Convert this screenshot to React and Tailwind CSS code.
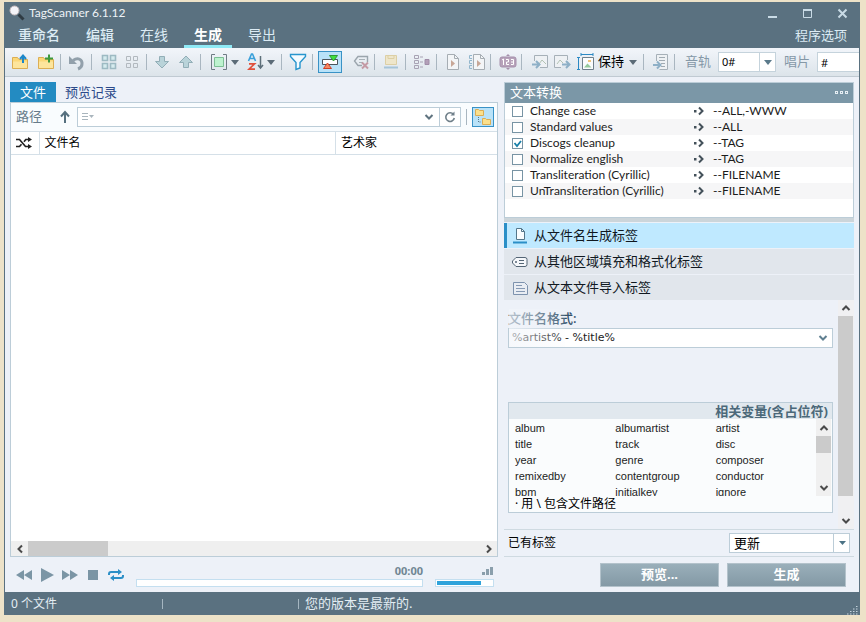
import clsx from 'clsx'

const conversions = [
  { name: 'Change case', target: '--ALL,-WWW' },
  { name: 'Standard values', target: '--ALL' },
  { name: 'Discogs cleanup', target: '--TAG', on: true },
  { name: 'Normalize english', target: '--TAG' },
  { name: 'Transliteration (Cyrillic)', target: '--FILENAME' },
  { name: 'UnTransliteration (Cyrillic)', target: '--FILENAME' },
]

const variables = [
  'album', 'albumartist', 'artist',
  'title', 'track', 'disc',
  'year', 'genre', 'composer',
  'remixedby', 'contentgroup', 'conductor',
  'bpm', 'initialkey', 'ignore',
]

function Svg({ w = 18, h = 18, className, children }) {
  return (
    <svg width={w} height={h} viewBox={`0 0 ${w} ${h}`} fill="none" className={clsx('block shrink-0', className)} aria-hidden="true">
      {children}
    </svg>
  )
}

function Tool({ label, className, children }) {
  return (
    <button type="button" aria-label={label} className={clsx('shrink-0', className)}>
      <Svg>{children}</Svg>
    </button>
  )
}

function Sep({ className }) {
  return <span className={clsx('h-4 w-px shrink-0 bg-[#a9b6c0]', className)} />
}

function Caret({ label, className }) {
  return (
    <button type="button" aria-label={label} className={clsx('shrink-0', className)}>
      <Svg w={8} h={5}><path d="M0 0h8L4 5z" fill="#5b6b77" /></Svg>
    </button>
  )
}

function Chevron({ dir = 'down', color = '#4a4a4a' }) {
  const d = {
    down: 'M1.5 3l3.5 3.5L8.500 3',
    up: 'M1.500 7L5 3.500 8.500 7',
    left: 'M7 1.500L3.500 5 7 8.500',
    right: 'M3 1.500L6.500 5 3 8.500',
  }[dir]
  return <Svg w={10} h={10}><path d={d} stroke={color} strokeWidth="2" /></Svg>
}

function Folder() {
  return (
    <>
      <path d="M1.500 15.500v-11h5l1.500 2h8.500v9z" fill="#fbd878" stroke="#dcae54" />
      <path d="M2 15V8.500h14V15z" fill="#fde59c" />
    </>
  )
}

function TitleBar() {
  return (
    <div className="flex h-[22px] items-center pl-1 text-[#eef3f6]">
      <Svg w={16} h={16}>
        <path d="M9.500 9.500l5 5" stroke="#2f3b43" strokeWidth="3" />
        <circle cx="5.500" cy="5.500" r="4.500" fill="#f4f4f8" stroke="#c3b8ba" />
      </Svg>
      <h1 className="ml-1 font-['Lato',sans-serif] text-[12px]">TagScanner 6.1.12</h1>
      <div className="ml-auto flex items-center gap-6 pr-[11px]">
        <button type="button" aria-label="最小化"><Svg w={11} h={11}><path d="M1 9h9" stroke="#c9dbe6" strokeWidth="2" /></Svg></button>
        <button type="button" aria-label="最大化"><Svg w={11} h={11}><path d="M1.500 1.500h8v8h-8z" stroke="#c9dbe6" /><path d="M1 2h9" stroke="#c9dbe6" strokeWidth="2" /></Svg></button>
        <button type="button" aria-label="关闭"><Svg w={11} h={11}><path d="M1.500 1.500l8 8M9.500 1.500l-8 8" stroke="#c9dbe6" strokeWidth="2" /></Svg></button>
      </div>
    </div>
  )
}

function MenuBar() {
  const items = ['重命名', '编辑', '在线', '生成', '导出']
  return (
    <nav className="flex h-6 items-stretch gap-[6px] pl-[3px] pr-3 text-[14px] text-[#dcebf4]">
      {items.map((item) => (
        <button
          key={item}
          type="button"
          className={clsx(
            'border-b-[3px] px-[10px]',
            item === '生成' ? 'border-[#8fe9f5] font-bold text-white' : 'border-transparent',
            (item === '重命名' || item === '编辑') && 'font-medium',
          )}
        >
          {item}
        </button>
      ))}
      <button type="button" className="ml-auto text-[13px]">程序选项</button>
    </nav>
  )
}

function Toolbar() {
  return (
    <div className="flex h-7 shrink-0 items-center overflow-hidden bg-linear-to-b from-[#f2f5fa] to-[#dce4ea] pl-[6px] text-[13px]">
      <Tool label="打开文件夹">
        <Folder />
        <path d="M12 10V3M9 6l3-3.500L15 6" stroke="#1c87c9" strokeWidth="2" />
      </Tool>
      <Tool label="添加文件夹" className="ml-2">
        <Folder />
        <path d="M12 1.500v8M8 5.500h8" stroke="#3c9a3c" strokeWidth="2" />
      </Tool>
      <Sep className="ml-[5px]" />
      <Tool label="撤销" className="ml-[6px]">
        <path d="M6 7.500c5-3.500 9.500-1 9 3.500 0 2-1.500 4-4 5" stroke="#92a0ab" strokeWidth="3" />
        <path d="M2 3v8h8z" fill="#92a0ab" />
      </Tool>
      <Sep className="ml-[6px]" />
      <Tool label="全选" className="ml-2">
        <path d="M2.500 2.500h5v5h-5zM10.500 2.500h5v5h-5zM2.500 10.500h5v5h-5zM10.500 10.500h5v5h-5z" fill="#d5ebee" stroke="#9dbac3" strokeWidth="1.600" />
      </Tool>
      <Tool label="取消选择" className="ml-[5px]">
        <path d="M3.500 3.500h4v4h-4zM10.500 3.500h4v4h-4zM3.500 10.500h4v4h-4zM10.500 10.500h4v4h-4z" stroke="#b2b9bf" strokeWidth="1" />
      </Tool>
      <Sep className="ml-[5px]" />
      <Tool label="下移" className="ml-[6px]">
        <path d="M6.500 3.500h5v5h4L9 15 2.500 8.500h4z" fill="#b9d3d9" stroke="#92aeb7" />
      </Tool>
      <Tool label="上移" className="ml-[6px]">
        <path d="M6.500 14.500h5v-5h4L9 3 2.500 9.500h4z" fill="#b9d3d9" stroke="#92aeb7" />
      </Tool>
      <Sep className="ml-[5px]" />
      <Tool label="选择" className="ml-[9px]">
        <path d="M5 1.500H1.500v15H5M13 1.500h3.500v15H13" stroke="#6f7b84" />
        <path d="M4.500 4.500h9v9h-9z" fill="#bdf3cf" stroke="#7dbf95" />
      </Tool>
      <Caret label="选择选项" className="ml-[3px]" />
      <Tool label="排序" className="ml-2">
        <path d="M1.500 8L4.500 1h1L8.500 8M3 5.500h4" stroke="#3aa0da" strokeWidth="1.600" />
        <path d="M2 10.800h5.500L2 16.200h6" stroke="#e0503c" strokeWidth="1.800" />
        <path d="M13.500 3v11M11 12l2.500 3 2.500-3" stroke="#5d6f7a" strokeWidth="1.500" />
      </Tool>
      <Caret label="排序选项" className="ml-0.5" />
      <Sep className="ml-[6px]" />
      <Tool label="筛选" className="ml-[7px]">
        <path d="M1.500 1.500h15v2L11 9.500V15l-4 1.500v-7l-5.500-6z" fill="#f4fbff" stroke="#2795cd" strokeWidth="1.400" />
      </Tool>
      <Sep className="ml-[5px]" />
      <button type="button" aria-label="自动预览" aria-pressed="true" className="ml-[5px] flex h-[22px] w-6 shrink-0 items-center justify-center border border-[#3992c6] bg-[#b9e2f8]">
        <Svg>
          <path d="M1.500 6.500h15v5h-15z" fill="#fff" stroke="#4b555c" />
          <path d="M8.500 2.500h8L12.500 8z" fill="#3fe03f" stroke="#2f9a35" />
          <path d="M2.500 15.500h8L6.500 10z" fill="#f58a63" stroke="#cf4128" />
        </Svg>
      </button>
      <Tool label="清除标签" className="ml-[10px]">
        <path d="M15.500 9V3.500H6L2.500 8 6 12.500h4" stroke="#9ba5ad" strokeWidth="1.400" />
        <path d="M7 6.500h6M7 9.500h4" stroke="#a9b2b8" />
        <path d="M10 9.500l6 6M16 9.500l-6 6" stroke="#c49aa5" strokeWidth="2" />
      </Tool>
      <Sep className="ml-1" />
      <Tool label="保存" className="ml-[7px]">
        <path d="M3.500 2.500h11v9h-11z" fill="#eee6cb" stroke="#dccfa5" />
        <path d="M6 2.500v3h6v-3" stroke="#dccfa5" />
        <path d="M2 14.500h14" stroke="#a6c4d8" strokeWidth="2" />
      </Tool>
      <Sep className="ml-[5px]" />
      <Tool label="整理" className="ml-[7px]">
        <path d="M1.500 2.500h4v3h-4zM1.500 7.500h4v3h-4zM1.500 12.500h4v3h-4zM7 4h3M7 9h3M7 14h3" stroke="#a8a3b4" />
        <path d="M12 6.500h4v5h-4z" fill="#b39fb8" stroke="#a08da8" />
      </Tool>
      <Sep className="ml-[5px]" />
      <Tool label="播放" className="ml-[7px]">
        <path d="M3.500 1.500h7l4 4v11h-11z" fill="#f3f5f7" stroke="#a6adb3" />
        <path d="M10.500 1.500v4h4" stroke="#a6adb3" />
        <path d="M7 7v7l4-3.500z" fill="#c8a797" />
      </Tool>
      <Tool label="播放列表" className="ml-[6px]">
        <path d="M5.500 1.500h7l4 4v11h-11z" fill="#f3f5f7" stroke="#a6adb3" />
        <path d="M12.500 1.500v4h4" stroke="#a6adb3" />
        <path d="M9 7v7l4-3.500z" fill="#c8a797" />
        <path d="M4 2.500H1.500v3H4M4 7.500H1.500v3H4M4 12.500H1.500v3H4" stroke="#92b6cc" />
      </Tool>
      <Sep className="ml-1" />
      <Tool label="编号" className="ml-2">
        <rect x="1" y="4" width="16" height="10" rx="2" fill="#b7a2ba" stroke="#a58fab" />
        <path d="M3 7l1.500-1v6M7 6.500h2.500V9H7.500v2.500H10M12 6.500h2.500v5H12M12 9h2.500" stroke="#fff" />
        <path d="M7 3l2-2 2 2zM7 15l2 2 2-2z" fill="#a58fab" />
      </Tool>
      <Sep className="ml-1" />
      <Tool label="导入封面" className="ml-[9px]">
        <path d="M3.500 8V2.500h13v12H9" fill="#eef1f4" stroke="#a6b0b8" />
        <path d="M8 11l3-4 4 4" stroke="#b3c3b4" />
        <path d="M1 11.500h7M5 8l3.500 3.500L5 15" stroke="#8eb0c7" strokeWidth="2" />
      </Tool>
      <Tool label="导出封面" className="ml-1">
        <path d="M14.500 7V2.500h-13v12H8" fill="#eef1f4" stroke="#a6b0b8" />
        <path d="M4 11l3-4 3 3" stroke="#b3c3b4" />
        <path d="M9 11.500h7M13 8l3.500 3.500L13 15" stroke="#8eb0c7" strokeWidth="2" />
      </Tool>
      <button type="button" className="ml-[6px] flex shrink-0 items-center gap-[3px] text-black">
        <Svg>
          <path d="M4 1.500h12M4 0v3M16 0v3M1.500 4v13M0 4.500h3M0 16.500h3" stroke="#2b89c4" />
          <path d="M5.500 4.500h11v12h-11z" fill="#fafcfd" stroke="#6e7f8b" />
          <path d="M7 14.500l3.500-4 4 4z" fill="#93c99b" />
          <path d="M11 7h3v2h-3z" fill="#efc57b" />
        </Svg>
        保持
      </button>
      <Caret label="保持选项" className="ml-[5px]" />
      <Sep className="ml-[6px]" />
      <Tool label="导入文本" className="ml-2">
        <path d="M4.500 8V1.500h11v15h-8" fill="#eef1f4" stroke="#a6b0b8" />
        <path d="M7 4.500h6M7 7.500h6M9 10.500h4M9 13.500h4" stroke="#a0aab2" />
        <path d="M1 12h7M5 8.500L8.500 12 5 15.500" stroke="#8eb0c7" strokeWidth="2" />
      </Tool>
      <Sep className="ml-1" />
      <label htmlFor="track" className="ml-[10px] shrink-0 text-[#8598a7]">音轨</label>
      <div className="relative ml-[7px] shrink-0">
        <select id="track" className="block h-5 w-[58px] appearance-none border border-[#c5d3dc] bg-white pl-[3px] text-[11px] text-black">
          <option>0#</option>
        </select>
        <span className="pointer-events-none absolute inset-y-0 right-0 flex w-[17px] items-center justify-center border-l border-[#c5d3dc]">
          <Svg w={8} h={5}><path d="M0 0h8L4 5z" fill="#5b7a8b" /></Svg>
        </span>
      </div>
      <label htmlFor="disc" className="ml-2 shrink-0 text-[#8598a7]">唱片</label>
      <input id="disc" defaultValue="#" className="ml-[7px] h-5 w-[58px] shrink-0 border border-[#c5d3dc] bg-white px-[3px] text-[11px] text-black" />
    </div>
  )
}

function FilePane() {
  return (
    <section className="flex min-h-0 min-w-0 flex-col">
      <div role="tablist" className="flex h-5 shrink-0 text-[13px]">
        <button type="button" role="tab" aria-selected="true" className="bg-[#238bc2] px-[10px] leading-5 text-white">文件</button>
        <button type="button" role="tab" aria-selected="false" className="px-[9px] leading-5 text-[#2c4a8a]">预览记录</button>
      </div>
      <div className="flex min-h-0 flex-1 flex-col border border-[#bccdd8] bg-white">
        <div className="flex h-7 shrink-0 items-center bg-[#f9fcfe] pl-[5px] pr-[3px]">
          <label htmlFor="path" className="text-[13px] text-[#667b8a]">路径</label>
          <button type="button" aria-label="上级目录" className="ml-[18px]">
            <Svg w={10} h={14}><path d="M5 13V3M1 6.500l4-4.500 4 4.500" stroke="#56707f" strokeWidth="2" /></Svg>
          </button>
          <div className="ml-[7px] flex h-5 min-w-0 flex-1 items-center border border-[#bccdd8] bg-white">
            <Svg w={14} h={10} className="ml-1"><path d="M0 1.500h6M0 4.500h6M0 7.500h6" stroke="#a9b5bd" /><path d="M7 3h5L9.500 6z" fill="#a9b5bd" /></Svg>
            <input id="path" defaultValue="" className="min-w-0 flex-1 px-1 text-[12px] outline-none" />
            <button type="button" aria-label="历史" className="px-[5px]"><Chevron color="#5f737f" /></button>
            <button type="button" aria-label="刷新" className="flex h-full w-[21px] items-center justify-center border-l border-[#bccdd8]">
              <Svg w={12} h={12}><path d="M9.500 3.500A4.300 4.300 0 1 0 10.300 7" stroke="#6f7f89" strokeWidth="1.600" /><path d="M6.500 4.500h4V0.500z" fill="#6f7f89" /></Svg>
            </button>
          </div>
          <Sep className="ml-[5px]" />
          <button type="button" aria-label="文件夹树" aria-pressed="true" className="ml-[5px] flex h-5 w-[22px] items-center justify-center border border-[#3992c6] bg-[#b9e2f8]">
            <Svg>
              <path d="M1.500 1.500h3l1 1h4v5h-8z" fill="#fbe08c" stroke="#dcae54" />
              <path d="M8.500 10.500h3l1 1h4v5h-8z" fill="#fbe08c" stroke="#dcae54" />
              <path d="M4.500 9v5h3" stroke="#5b7a8b" strokeDasharray="1 1" />
            </Svg>
          </button>
        </div>
        <table className="w-full table-fixed border-t border-[#d5e0e8] text-left text-[12px] text-black">
          <thead>
            <tr className="h-[23px] border-b border-[#d5e0e8]">
              <th className="w-7 border-r border-[#d5e0e8] pl-[5px]">
                <Svg w={16} h={12}>
                  <path d="M0 2.500h3.500l6 7H13M0 9.500h3.500l2-2.300M8 4.700l1.800-2.200H13" stroke="#222" strokeWidth="1.700" />
                  <path d="M12 0l4 2.500L12 5zM12 7l4 2.500-4 2.500z" fill="#222" />
                </Svg>
              </th>
              <th className="w-[61%] border-r border-[#d5e0e8] pl-[5px] font-normal">文件名</th>
              <th className="pl-[5px] font-normal">艺术家</th>
            </tr>
          </thead>
        </table>
        <div className="flex-1" />
        <div className="flex h-[15px] shrink-0 items-center bg-[#efefef]">
          <button type="button" aria-label="向左" className="flex w-[17px] justify-center"><Chevron dir="left" /></button>
          <div className="h-full w-20 bg-[#cbcbcb]" />
          <button type="button" aria-label="向右" className="ml-auto flex w-[17px] justify-center"><Chevron dir="right" /></button>
        </div>
      </div>
      <Player />
    </section>
  )
}

function Player() {
  return (
    <div className="flex h-[35px] shrink-0 items-center pl-[6px] pr-1">
      <button type="button" aria-label="上一首"><Svg w={17} h={12}><path d="M8 1v10L0 6zM16 1v10L8 6z" fill="#7b95a5" /></Svg></button>
      <button type="button" aria-label="播放" className="ml-2"><Svg w={13} h={14}><path d="M0 0v14l13-7z" fill="#7b95a5" /></Svg></button>
      <button type="button" aria-label="下一首" className="ml-2"><Svg w={17} h={12}><path d="M0 1v10l8-5zM8 1v10l8-5z" fill="#7b95a5" /></Svg></button>
      <button type="button" aria-label="停止" className="ml-[9px]"><Svg w={10} h={10}><path d="M0 0h10v10H0z" fill="#7b95a5" /></Svg></button>
      <button type="button" aria-label="循环" className="ml-[10px]">
        <Svg w={16} h={12}>
          <path d="M1 6V5q0-2 2-2h8M15 6v1q0 2-2 2H5" stroke="#2b8fc7" strokeWidth="2" />
          <path d="M10 0l4 3-4 3zM6 6L2 9l4 3z" fill="#2b8fc7" />
        </Svg>
      </button>
      <div className="ml-3 min-w-0 flex-1">
        <p className="text-right text-[11px] leading-4 font-bold text-[#708693]">00:00</p>
        <div className="h-2 border border-[#c4dff0] bg-white" />
      </div>
      <div className="ml-3 w-[59px]">
        <div className="flex h-4 items-center justify-end">
          <Svg w={12} h={10}><path d="M0 6h3v3H0zM4 3h3v6H4zM8 1h3v8H8z" fill="#8b9fac" /></Svg>
        </div>
        <div className="h-2 border border-[#c4dff0] bg-white p-px">
          <div className="h-full w-4/5 bg-[#2fa3db]" />
        </div>
      </div>
    </div>
  )
}

function ConversionPanel() {
  return (
    <div className="flex h-[136px] shrink-0 flex-col border border-[#bccdd8] bg-white">
      <div className="flex h-5 items-center justify-between bg-[#7b97a7] px-[5px] text-[13px] text-white">
        <h2>文本转换</h2>
        <button type="button" aria-label="更多"><Svg w={13} h={4}><path d="M0 0h3v3H0zM5 0h3v3H5zM10 0h3v3h-3z" fill="#e6eef3" /><path d="M1 1h1v1H1zM6 1h1v1H6zM11 1h1v1h-1z" fill="#7b97a7" /></Svg></button>
      </div>
      <ul className="font-['Lato','Noto_Sans_CJK_SC',sans-serif] text-[12px] leading-4 text-[#1c1c1c]">
        {conversions.map((c) => (
          <li key={c.name} className="even:bg-[#f6f6f7]">
            <label className="grid h-4 grid-cols-[25px_164px_19px_1fr] items-center">
              <span className="relative ml-[7px] size-[11px]">
                <input type="checkbox" defaultChecked={c.on} className="peer block size-[11px] appearance-none border border-[#7894a4] bg-white" />
                <svg viewBox="0 0 11 11" className="pointer-events-none absolute inset-0 hidden size-[11px] peer-checked:block" fill="none">
                  <path d="M2.500 5l2.500 3 4-5" stroke="#177fa8" strokeWidth="1.800" />
                </svg>
              </span>
              <span>{c.name}</span>
              <Svg w={11} h={10}><path d="M0 4h2.500v2.500H0z" fill="#44515a" /><path d="M5 1.500L8.500 5 5 8.500" stroke="#44515a" strokeWidth="2" /></Svg>
              <span>{c.target}</span>
            </label>
          </li>
        ))}
      </ul>
    </div>
  )
}

function ModeButton({ label, selected, children }) {
  return (
    <button
      type="button"
      aria-pressed={!!selected}
      className={clsx(
        'flex h-[25px] w-full items-center gap-[5px] border-l-[3px] pl-1 text-[13px] text-[#10181f]',
        selected ? 'border-[#2b8fc7] bg-[#bfe9ff]' : 'border-transparent bg-[#e1e6ec]',
      )}
    >
      <Svg>{children}</Svg>
      {label}
    </button>
  )
}

function FormatForm() {
  return (
    <div className="flex min-h-0 flex-1 border-b border-[#cfdae1]">
      <div className="flex min-w-0 flex-1 flex-col pl-1 pr-[5px] pt-2">
        <div className="relative">
          <label htmlFor="format" className="block text-[13px] leading-5 font-medium text-[#35536b]">文件名格式:</label>
          <div className="relative">
            <select id="format" className="block h-5 w-full appearance-none border border-[#bccdd8] bg-white px-[3px] font-['DejaVu_Sans',sans-serif] text-[11px] text-[#1c1c1c]">
              <option>%artist% - %title%</option>
            </select>
            <span className="pointer-events-none absolute inset-y-0 right-[5px] flex items-center"><Chevron color="#5f7f90" /></span>
          </div>
          {/* soft fade at the start of the field */}
          <div className="pointer-events-none absolute inset-y-px left-px w-14 bg-linear-to-r from-[#f2f5fa]/70 to-[#f2f5fa]/10" />
        </div>
        <div className="mt-[54px] border border-[#bccdd8] bg-[#fafcfd] text-[#1c1c1c]">
          <h3 className="h-4 bg-[#e1e8ee] pr-1 text-right text-[13px] leading-4 font-bold text-[#4b6879]">相关变量(含占位符)</h3>
          <div className="flex h-[77px]">
            <ul className="grid flex-1 grid-cols-3 content-start overflow-hidden pl-[6px] pt-px font-['Liberation_Sans',sans-serif] text-[11px] leading-4">
              {variables.map((v) => <li key={v}>{v}</li>)}
            </ul>
            <div className="mr-px flex w-[15px] flex-col items-center bg-[#f0f0f0]">
              <button type="button" aria-label="向上" className="flex h-[17px] items-center"><Chevron dir="up" /></button>
              <div className="h-[17px] w-full bg-[#cbcbcb]" />
              <button type="button" aria-label="向下" className="mt-auto flex h-[17px] items-center"><Chevron /></button>
            </div>
          </div>
          <p className="h-4 pl-[6px] text-[12px] leading-4 text-black">· 用 \ 包含文件路径</p>
        </div>
      </div>
      <div className="flex w-4 flex-col items-center bg-[#f0f0f2] pr-px">
        <button type="button" aria-label="向上" className="flex h-4 shrink-0 items-center"><Chevron dir="up" /></button>
        <div className="h-[180px] w-full bg-[#cbcbcb]" />
        <button type="button" aria-label="向下" className="mt-auto flex h-4 items-center"><Chevron /></button>
      </div>
    </div>
  )
}

function GeneratePane() {
  return (
    <section className="flex min-h-0 min-w-0 flex-col">
      <ConversionPanel />
      <div className="mb-px h-1 shrink-0 bg-[#ccd5da]" />
      <div className="flex shrink-0 flex-col gap-px">
        <ModeButton label="从文件名生成标签" selected>
          <path d="M5.500 1.500h5l3 3v8h-8z" fill="#fafdff" stroke="#54778b" />
          <path d="M10.500 1.500v3h3" stroke="#54778b" />
          <path d="M2 15.500h14" stroke="#2b8fc7" strokeWidth="2" />
        </ModeButton>
        <ModeButton label="从其他区域填充和格式化标签">
          <path d="M5 4.500h9q2 0 2 2v5q0 2-2 2H5L1.500 10V8z" fill="#f5f7fa" stroke="#546575" />
          <path d="M8 7.500h5M8 10.500h5" stroke="#546575" />
          <circle cx="5" cy="9" r="1" fill="#546575" />
        </ModeButton>
        <ModeButton label="从文本文件导入标签">
          <path d="M2.500 3.500h11l3 3v9h-14z" fill="#e9edf3" stroke="#7d92ad" />
          <path d="M5 6.500h6M5 9.500h9M5 12.500h9" stroke="#8599b3" />
        </ModeButton>
      </div>
      <FormatForm />
      <div className="flex h-[27px] shrink-0 items-center justify-between border-b border-[#cfdae1] pl-1 pr-1 text-black">
        <label htmlFor="existing" className="text-[12px]">已有标签</label>
        <div className="relative">
          <select id="existing" className="block h-5 w-[121px] appearance-none border border-[#bccdd8] bg-white pl-1 text-[13px] leading-4">
            <option>更新</option>
          </select>
          <span className="pointer-events-none absolute inset-y-0 right-0 flex w-[17px] items-center justify-center border-l border-[#bccdd8]">
            <Svg w={7} h={4}><path d="M0 0h7L3.500 4z" fill="#4b7285" /></Svg>
          </span>
        </div>
      </div>
      <div className="flex h-[35px] shrink-0 items-center justify-end gap-2 pr-2 text-[13px] font-bold text-white">
        <button type="button" className="h-6 w-[119px] border border-[#b3c2cb] bg-linear-to-b from-[#9aafba] to-[#8399a5]">预览...</button>
        <button type="button" className="h-6 w-[119px] border border-[#b3c2cb] bg-linear-to-b from-[#9aafba] to-[#8399a5]">生成</button>
      </div>
    </section>
  )
}

function StatusBar() {
  return (
    <footer className="relative flex h-[23px] shrink-0 items-center bg-[#5a7180] pl-[6px] text-[12px] text-[#e3edf3]">
      <span className="w-[151px]">0 个文件</span>
      <span className="h-[10px] w-[136px] border-l border-[#a5b6c1]" />
      <span className="h-[10px] w-[7px] border-l border-[#a5b6c1]" />
      <span className="text-[13px]">您的版本是最新的.</span>
      <Svg w={12} h={12} className="absolute bottom-0 right-0">
        <path d="M0 11h12M3 8.500h9M6 6h6M9 3.500h3" stroke="#c5d4dd" strokeDasharray="1.500 1.500" />
      </Svg>
    </footer>
  )
}

export default function App() {
  return (
    <div className="h-screen min-h-[600px] bg-[#ede2c8] pt-0.5 pr-[6px] pb-[7px] pl-1 font-['Noto_Sans','Noto_Sans_CJK_SC',sans-serif]">
      <div className="flex h-full flex-col overflow-hidden border-x border-[#5a7180] bg-[#edf1f8]">
        <header className="shrink-0 bg-[#5a7180]">
          <TitleBar />
          <MenuBar />
        </header>
        <Toolbar />
        <main className="grid min-h-0 flex-1 grid-cols-[488fr_350fr] gap-[6px] border-t border-[#c0cad2] px-[5px] pt-[5px]">
          <FilePane />
          <GeneratePane />
        </main>
        <StatusBar />
      </div>
    </div>
  )
}
